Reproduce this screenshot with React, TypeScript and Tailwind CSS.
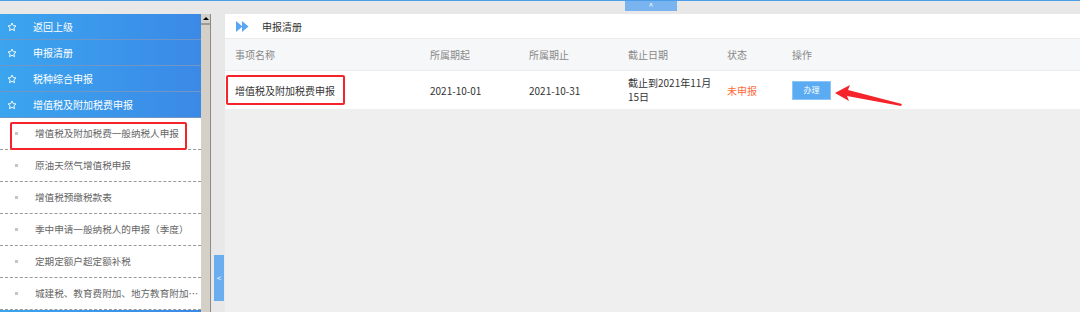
import React from 'react';

const menus = ['返回上级', '申报清册', '税种综合申报', '增值税及附加税费申报'];

const subItems = [
  '增值税及附加税费一般纳税人申报',
  '原油天然气增值税申报',
  '增值税预缴税款表',
  '季中申请一般纳税人的申报（季度）',
  '定期定额户超定额补税',
  '城建税、教育费附加、地方教育附加税（费）申报',
];

function Star() {
  return (
    <svg width="10" height="10" viewBox="0 0 24 24" fill="none" stroke="white" strokeWidth="2.2" strokeLinejoin="round">
      <path d="M12 2.5l2.9 6.2 6.7.8-5 4.6 1.4 6.7L12 17.4l-6 3.4 1.4-6.7-5-4.6 6.7-.8z" />
    </svg>
  );
}

export default function App() {
  return (
    <div className="relative w-[1080px] h-[312px] overflow-hidden bg-[#e8e8e8] border-t border-[#4a9ee8] font-['Noto_Sans_CJK_SC',sans-serif]">
      {/* top collapse bar */}
      <div className="h-[13px] pl-[625px]">
        <div className="w-[52px] h-[10px] bg-[#7ab4f0] text-white text-[8px] leading-[10px] text-center">^</div>
      </div>

      <div className="flex h-[298px]">
        {/* sidebar */}
        <div className="w-[201px] bg-white flex flex-col overflow-hidden">
          {menus.map((m) => (
            <div
              key={m}
              className="h-[26px] shrink-0 flex items-center bg-gradient-to-r from-[#3ba5ef] to-[#3b89e6] border-b border-[#6f96c6] text-white text-[10px]"
            >
              <span className="w-[33px] pl-[7px] flex items-center">
                <Star />
              </span>
              <span>{m}</span>
            </div>
          ))}
          {subItems.map((s) => (
            <div key={s} className="h-[32px] flex items-center border-b border-dashed border-[#9a9a9a] text-[#666] text-[9.6px] shrink-0">
              <span className="w-[35px] shrink-0 pl-[15px] flex items-center">
                <span className="w-[3px] h-[3px] bg-[#c4c4c4]" />
              </span>
              <span className="truncate">{s}</span>
            </div>
          ))}
          <div className="h-[10px] bg-gradient-to-r from-[#3ba5ef] to-[#3b89e6] shrink-0" />
        </div>

        {/* scrollbar */}
        <div className="w-[10px] bg-[#d4d0c8] border-r border-[#8a8a8a] flex flex-col">
          <div className="h-[11px] border-b-2 border-[#9c9c9c] flex items-center justify-center">
            <span className="w-0 h-0 border-x-[3px] border-x-transparent border-b-[3px] border-b-black" />
          </div>
        </div>

        {/* collapse gap */}
        <div className="w-[14px] flex flex-col pt-[241px] pl-[3px]">
          <div className="w-[10px] h-[46px] bg-[#6aaef0] flex items-center justify-center text-white text-[8px]">&lt;</div>
        </div>

        {/* main */}
        <div className="flex-1 bg-[#efefef] flex flex-col">
          <div className="h-[25px] shrink-0 bg-white flex items-center border-b border-[#ebebeb]">
            <svg className="ml-[11px]" width="13" height="11" viewBox="0 0 13 11">
              <path d="M0 0 L6.5 5.5 L0 11 Z" fill="#5aa6f0" />
              <path d="M6 0 L12.5 5.5 L6 11 Z" fill="#5aa6f0" />
            </svg>
            <span className="ml-[13px] text-[10px] text-[#333]">申报清册</span>
          </div>
          <div className="h-[32px] shrink-0 bg-[#f6f7f9] flex items-center text-[10px] text-[#888] border-b border-[#ececec]">
            <div className="w-[205px] pl-[10px]">事项名称</div>
            <div className="w-[99px]">所属期起</div>
            <div className="w-[99px]">所属期止</div>
            <div className="w-[99px]">截止日期</div>
            <div className="w-[65px]">状态</div>
            <div>操作</div>
          </div>
          <div className="h-[38px] shrink-0 bg-white flex items-center text-[10px] text-[#333]">
            <div className="w-[205px] pl-[10px]">增值税及附加税费申报</div>
            <div className="w-[99px]">2021-10-01</div>
            <div className="w-[99px]">2021-10-31</div>
            <div className="w-[99px] leading-[14px]">
              截止到2021年11月
              <br />
              15日
            </div>
            <div className="w-[65px] text-[#ff6a3a]">未申报</div>
            <div className="w-[39px] h-[19px] bg-[#5aabf2] border border-[#8cc6f6] text-white text-[8px] flex items-center justify-center">
              办理
            </div>
          </div>
        </div>
      </div>

      {/* annotations */}
      <div className="absolute left-[10px] top-[121px] w-[177px] h-[28px] border-2 border-[#f5232a] rounded-[2px]" />
      <div className="absolute left-[226px] top-[74px] w-[119px] h-[30px] border-2 border-[#f5232a] rounded-[2px]" />
      <svg className="absolute left-[830px] top-[80px]" width="80" height="30" viewBox="830 80 80 30">
        <polygon points="835,92 850,84 848,89 902,103 901,105 847,95 849,100" fill="#f5232a" />
      </svg>
    </div>
  );
}
